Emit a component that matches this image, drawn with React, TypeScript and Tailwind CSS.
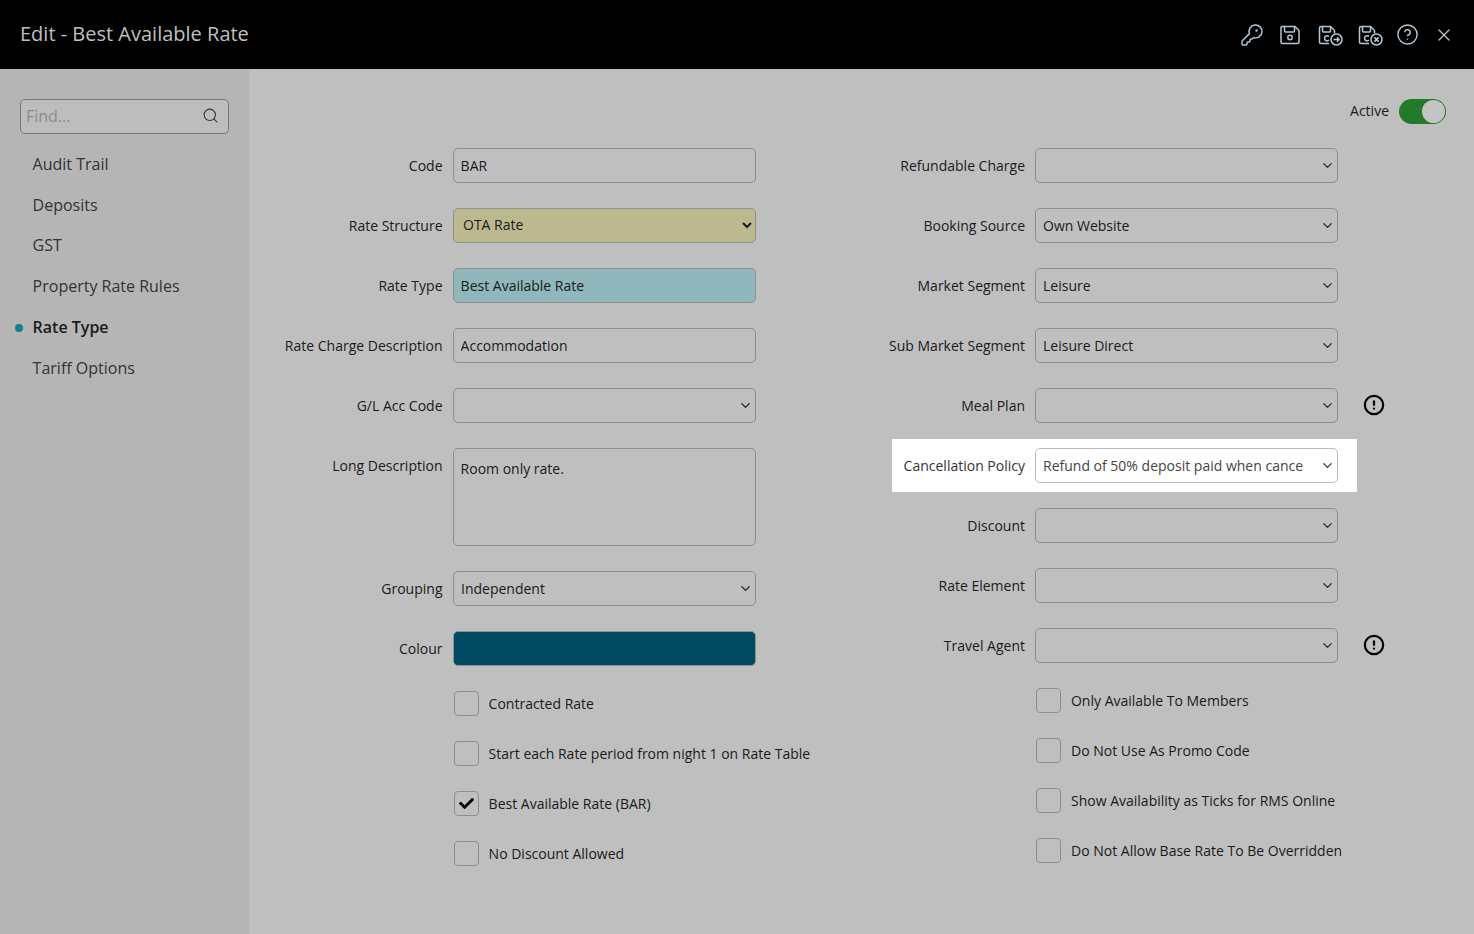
import { ChevronDown, CircleAlert, CircleHelp, KeyRound, Search, X } from "lucide-react";
import { FaCheck } from "react-icons/fa";
import { ReactNode } from "react";

const fieldBase =
  "h-[35px] w-[303px] rounded-[5px] border border-[#8f8f8f] text-[14px] text-[#1a1a1a] outline-none";

const SaveIcon = () => (
  <svg viewBox="0 0 24 24" fill="none" stroke="currentColor" strokeWidth="1.5" className="ml-[14px] h-6 w-6">
    <path d="M5 3.5h12l4 4V19a1.5 1.5 0 0 1-1.5 1.5h-15A1.5 1.5 0 0 1 3 19V5a1.5 1.5 0 0 1 2-1.5Z" />
    <path d="M6.5 3.5V8a1 1 0 0 0 1 1h8a1 1 0 0 0 1-1V3.5" />
    <circle cx="12" cy="14.5" r="2.2" />
  </svg>
);

const SaveBadgeIcon = ({ close, className }: { close?: boolean; className: string }) => (
  <svg viewBox="0 0 28 24" fill="none" stroke="currentColor" strokeWidth="1.5" className={`h-6 w-7 ${className}`}>
    <path d="M13 20.5H5A1.5 1.5 0 0 1 3.5 19V5A1.5 1.5 0 0 1 5 3.5h9.5l4 4v3" />
    <path d="M6.5 3.5V8a1 1 0 0 0 1 1h6a1 1 0 0 0 1-1V3.5" />
    <path d="M13 13.5a2.6 2.6 0 1 0 0 3.6" />
    <circle cx="20.5" cy="16.5" r="5.5" />
    {close ? (
      <path d="m18.4 14.4 4.2 4.2m0-4.2-4.2 4.2" strokeWidth="1.7" />
    ) : (
      <path d="M17.6 16.5h5.6m-2.3-2.3 2.3 2.3-2.3 2.3" strokeWidth="1.4" />
    )}
  </svg>
);

const Row = ({ label, children, top, labelWidth }: { label: string; children: ReactNode; top?: boolean; labelWidth: string }) => (
  <div className={`mb-[25px] flex gap-[10px] ${top ? "items-start" : "items-center"}`}>
    <label className={`${labelWidth} text-right text-[14px] text-[#1a1a1a] ${top ? "pt-[7px]" : ""}`}>{label}</label>
    {children}
  </div>
);

const TextBox = ({ value, className = "bg-transparent" }: { value: string; className?: string }) => (
  <input readOnly defaultValue={value} className={`${fieldBase} px-[6.6px] ${className}`} />
);

const Select = ({ value = "" }: { value?: string }) => (
  <div className="relative h-[35px] w-[303px]">
    <select
      defaultValue={value}
      className={`${fieldBase} appearance-none overflow-hidden bg-transparent pl-[7px] pr-[30px]`}
    >
      <option value={value}>{value}</option>
    </select>
    <ChevronDown size={15} strokeWidth={2} className="pointer-events-none absolute right-[3px] top-[10px] text-[#222]" />
  </div>
);

const Box = ({ label, checked }: { label: string; checked?: boolean }) => (
  <div className="mb-[25px] flex h-[25px] items-center whitespace-nowrap">
    <div className="ml-px mr-[9.6px] flex h-[25px] w-[25px] shrink-0 items-center justify-center rounded-[4px] border border-[#8f8f8f]">
      {checked && <FaCheck size={15} className="text-black" />}
    </div>
    <span className="text-[14px] text-[#1a1a1a]">{label}</span>
  </div>
);

const Alert = () => <CircleAlert size={22} strokeWidth={2.4} className="mb-[2px] ml-[25px] text-black" />;

const sideItems = ["Audit Trail", "Deposits", "GST", "Property Rate Rules", "Rate Type", "Tariff Options"];

export default function App() {
  const left = "w-[173px] pr-[0.5px]";
  const right = "w-[145px]";
  return (
    <div className="flex h-[934px] flex-col overflow-hidden bg-[#bfbfbf] font-['Open_Sans',sans-serif]">
      <header className="flex h-[69px] items-center justify-between bg-black pl-5 pr-[20px]">
        <h1 className="mb-[2px] text-[20px] text-[#bfbfbf]">Edit - Best Available Rate</h1>
        <div className="flex items-center text-[#b6c6d2]">
          <KeyRound size={24} strokeWidth={1.5} />
          <SaveIcon />
          <SaveBadgeIcon className="ml-[14px]" />
          <SaveBadgeIcon close className="ml-[12px]" />
          <CircleHelp size={23} strokeWidth={1.5} className="ml-[12px]" />
          <X size={20} strokeWidth={1.5} className="ml-[15px]" />
        </div>
      </header>

      <div className="flex flex-1">
        <aside className="w-[250px] border-r border-[#bcbcbc] bg-[#b5b5b5] pl-5 pt-[30px]">
          <div className="relative mb-[10.4px] h-[35px] w-[209px]">
            <input
              placeholder="Find..."
              className="h-full w-full rounded-[5px] border border-[#777] bg-[#bdbdbd] px-[5px] pb-[2px] text-[16px] outline-none placeholder:text-[#8c8c8c]"
            />
            <Search size={17} strokeWidth={1.5} className="absolute right-[10px] top-[8px] text-[#333]" />
          </div>
          <nav className="flex flex-col">
            {sideItems.map((item) => (
              <div key={item} className="relative flex h-[40.8px] items-center pl-[12.6px]">
                {item === "Rate Type" && (
                  <span className="absolute -left-[5px] top-[16px] h-2 w-2 rounded-full bg-[#0f7f8c]" />
                )}
                <span className={`mb-[2px] text-[16px] ${item === "Rate Type" ? "font-semibold text-[#1a1a1a]" : "text-[#333]"}`}>
                  {item}
                </span>
              </div>
            ))}
          </nav>
        </aside>

        <main className="flex-1 pl-5 pr-7 pt-[30px]">
          <div className="mb-[24px] flex h-[25px] items-center justify-end gap-[10px]">
            <span className="mb-[2px] text-[14px] text-[#1a1a1a]">Active</span>
            <div className="flex h-[25px] w-[47px] items-center justify-end rounded-full bg-[#25792a] pr-px">
              <div className="h-[23px] w-[23px] rounded-full bg-[#c4c4c4]" />
            </div>
          </div>

          <div className="flex gap-[124px]">
            <section className="w-[486px]">
              <Row label="Code" labelWidth={left}>
                <TextBox value="BAR" />
              </Row>
              <Row label="Rate Structure" labelWidth={left}>
                <select defaultValue="OTA Rate" className={`${fieldBase} bg-[#bdb98f] pb-[2px] pl-[5px] pr-px`}>
                  <option>OTA Rate</option>
                </select>
              </Row>
              <Row label="Rate Type" labelWidth={left}>
                <TextBox value="Best Available Rate" className="bg-[#8fb7bc]" />
              </Row>
              <Row label="Rate Charge Description" labelWidth={left}>
                <TextBox value="Accommodation" />
              </Row>
              <Row label="G/L Acc Code" labelWidth={left}>
                <Select />
              </Row>
              <Row label="Long Description" labelWidth={left} top>
                <textarea
                  readOnly
                  defaultValue="Room only rate."
                  className="h-[98px] w-[303px] resize-none rounded-[5px] border border-[#8f8f8f] bg-transparent px-[6.6px] py-[9px] text-[14px] text-[#1a1a1a] outline-none"
                />
              </Row>
              <Row label="Grouping" labelWidth={left}>
                <Select value="Independent" />
              </Row>
              <Row label="Colour" labelWidth={left}>
                <div className="h-[35px] w-[303px] rounded-[5px] border border-[#8f8f8f] bg-[#004a62]" />
              </Row>
              <div className="ml-[183px]">
                <Box label="Contracted Rate" />
                <Box label="Start each Rate period from night 1 on Rate Table" />
                <Box label="Best Available Rate (BAR)" checked />
                <Box label="No Discount Allowed" />
              </div>
            </section>

            <section>
              <Row label="Refundable Charge" labelWidth={right}>
                <Select />
              </Row>
              <Row label="Booking Source" labelWidth={right}>
                <Select value="Own Website" />
              </Row>
              <Row label="Market Segment" labelWidth={right}>
                <Select value="Leisure" />
              </Row>
              <Row label="Sub Market Segment" labelWidth={right}>
                <Select value="Leisure Direct" />
              </Row>
              <div className="mb-[25px] flex items-center">
                <label className="mr-[10px] w-[145px] text-right text-[14px] text-[#1a1a1a]">Meal Plan</label>
                <Select />
                <Alert />
              </div>
              <div className="relative mb-[25px] w-[458px]">
                <div className="absolute -right-[19px] -top-[9px] -bottom-[9px] left-[12px] bg-white" />
                <div className="relative flex items-center gap-[10px]">
                  <label className="w-[145px] text-right text-[14px] text-[#333]">Cancellation Policy</label>
                  <div className="relative h-[35px] w-[303px] rounded-[5px] border border-[#bbb] bg-white pl-[7px] text-[14px] leading-[33px] text-[#444]">
                    Refund of 50% deposit paid when cance
                    <ChevronDown size={15} strokeWidth={2} className="absolute right-[2px] top-[9px] text-[#333]" />
                  </div>
                </div>
              </div>
              <Row label="Discount" labelWidth={right}>
                <Select />
              </Row>
              <Row label="Rate Element" labelWidth={right}>
                <Select />
              </Row>
              <div className="mb-[25px] flex items-center">
                <label className="mr-[10px] w-[145px] text-right text-[14px] text-[#1a1a1a]">Travel Agent</label>
                <Select />
                <Alert />
              </div>
              <div className="ml-[155.4px]">
                <Box label="Only Available To Members" />
                <Box label="Do Not Use As Promo Code" />
                <Box label="Show Availability as Ticks for RMS Online" />
                <Box label="Do Not Allow Base Rate To Be Overridden" />
              </div>
            </section>
          </div>
        </main>
      </div>
    </div>
  );
}
